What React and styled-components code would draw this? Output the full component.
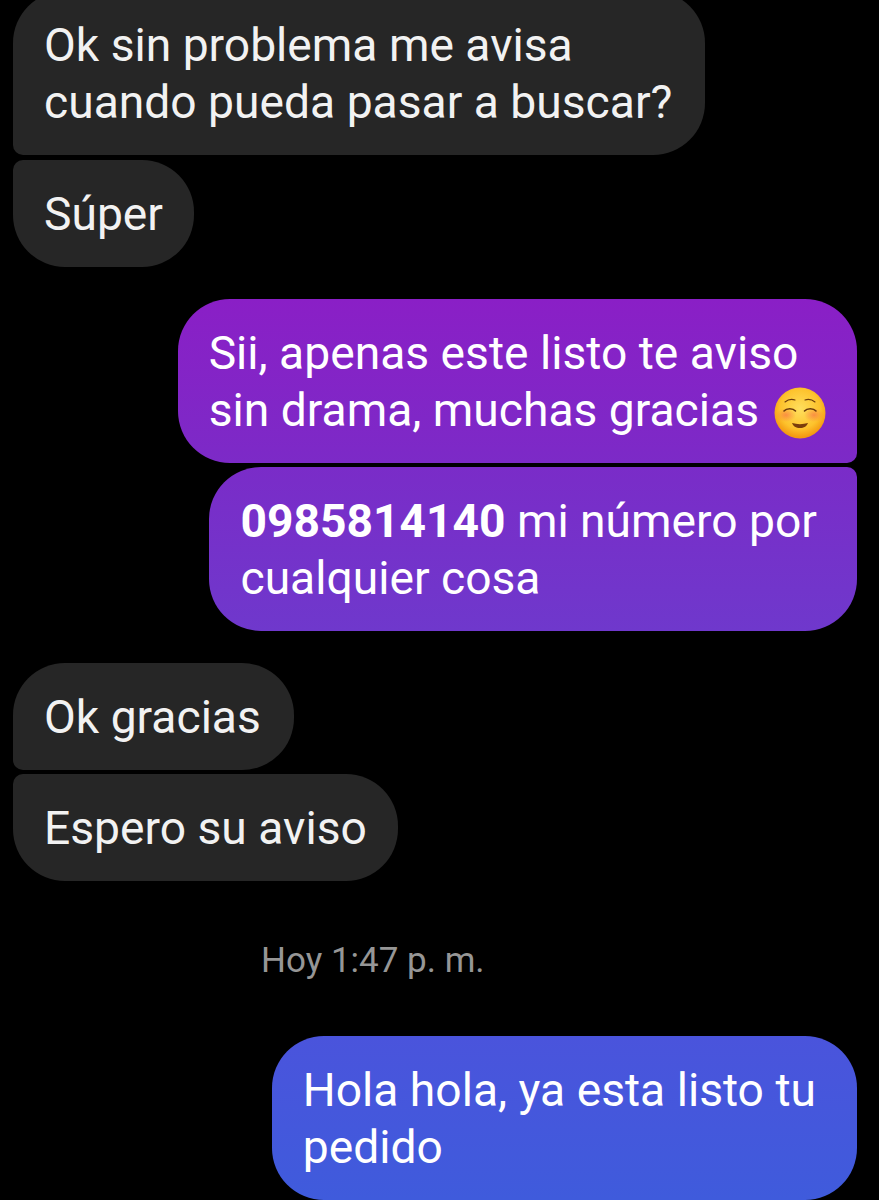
import React from "react";
import styled, { createGlobalStyle, css } from "styled-components";

const GlobalStyle = createGlobalStyle`
    html, body {
        margin: 0;
        padding: 0;
        background: #000;
    }
`;

const Screen = styled.div`
    width: 879px;
    height: 1200px;
    overflow: hidden;
    background: #000;
    font-family: Roboto, "Liberation Sans", sans-serif;
`;

const Thread = styled.div`
    display: flex;
    flex-direction: column;
    margin-top: -9px;
    padding: 0 22px 0 13px;
`;

const Group = styled.div`
    display: flex;
    flex-direction: column;
    gap: ${props => props.gap || 4}px;
    align-items: ${props => (props.mine ? "flex-end" : "flex-start")};
    margin-top: ${props => props.top || 0}px;
`;

const corners = {
    in_first: "52px 52px 52px 10px",
    in_last: "10px 52px 52px 52px",
    out_first: "52px 52px 10px 52px",
    out_last: "52px 10px 52px 52px",
    out_only: "52px",
};

const Bubble = styled.div`
    box-sizing: border-box;
    padding: 26px ${props => props.right || 31}px 24px 31px;
    font-size: 46.2px;
    line-height: 57px;
    white-space: nowrap;
    color: #f2f2f2;
    background: #262626;
    border-radius: ${props => corners[props.shape]};
    ${props => props.from && css`
        color: #fff;
        background: linear-gradient(180deg, ${props.from}, ${props.to});
    `}
`;

const Phone = styled.b`
    font-weight: 700;
`;

const Stamp = styled.div`
    margin: 56px 0 0 248px;
    font-size: 35px;
    line-height: 48px;
    color: #969696;
`;

const EmojiSvg = styled.svg`
    width: 52px;
    height: 52px;
    margin: -12px 0 -12px 15px;
    vertical-align: -1px;
`;

const SmileEmoji = () => (
    <EmojiSvg viewBox="0 0 52 52">
        <defs>
            <radialGradient id="face" cx="50%" cy="42%" r="55%">
                <stop offset="0%" stopColor="#ffdf5e" />
                <stop offset="72%" stopColor="#fdc22c" />
                <stop offset="100%" stopColor="#f49a12" />
            </radialGradient>
            <radialGradient id="blush">
                <stop offset="0%" stopColor="#f8694a" stopOpacity="0.6" />
                <stop offset="100%" stopColor="#f8694a" stopOpacity="0" />
            </radialGradient>
        </defs>
        <circle cx="26" cy="26" r="25.5" fill="url(#face)" />
        <ellipse cx="12" cy="28" rx="10" ry="7" fill="url(#blush)" />
        <ellipse cx="40" cy="28" rx="10" ry="7" fill="url(#blush)" />
        <g fill="none" stroke="#6b3a0c" strokeLinecap="round">
            <path d="M10 24c2.500-3 9-3 11.500 0" strokeWidth="1.600" />
            <path d="M30.500 24c2.500-3 9-3 11.500 0" strokeWidth="1.600" />
            <path d="M11 15c3-2.500 7-3 10-2" strokeWidth="1.100" />
            <path d="M31 13c3-1 7-.5 10 2" strokeWidth="1.100" />
        </g>
        <path d="M18 36c5 1.500 11 1.500 16 0-1 3-4 5-8 5s-7-2-8-5z" fill="#7a3d0c" />
    </EmojiSvg>
);

export default function App() {
    return (
        <Screen>
            <GlobalStyle />
            <Thread>
                <Group gap={5}>
                    <Bubble shape="in_first" right={33}>Ok sin problema me avisa<br />cuando pueda pasar a buscar?</Bubble>
                    <Bubble shape="in_last">Súper</Bubble>
                </Group>
                <Group mine top={32}>
                    <Bubble shape="out_first" from="#8a1fc6" to="#7c2ac7">
                        Sii, apenas este listo te aviso<br />sin drama, muchas gracias<SmileEmoji />
                    </Bubble>
                    <Bubble shape="out_last" right={40} from="#7a2cc8" to="#6f38cc">
                        <Phone>0985814140</Phone> mi número por<br />cualquier cosa
                    </Bubble>
                </Group>
                <Group top={32}>
                    <Bubble shape="in_first" right={33}>Ok gracias</Bubble>
                    <Bubble shape="in_last">Espero su aviso</Bubble>
                </Group>
                <Stamp>Hoy 1:47 p. m.</Stamp>
                <Group mine top={51}>
                    <Bubble shape="out_only" right={41} from="#4a54dc" to="#3f5bdc">
                        Hola hola, ya esta listo tu<br />pedido
                    </Bubble>
                </Group>
            </Thread>
        </Screen>
    );
}
